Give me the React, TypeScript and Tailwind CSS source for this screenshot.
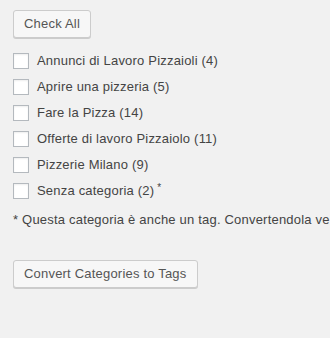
import React from 'react';

const categories = [
  { name: 'Annunci di Lavoro Pizzaioli', count: 4 },
  { name: 'Aprire una pizzeria', count: 5 },
  { name: 'Fare la Pizza', count: 14 },
  { name: 'Offerte di lavoro Pizzaiolo', count: 11 },
  { name: 'Pizzerie Milano', count: 9 },
  { name: 'Senza categoria', count: 2, tag: true },
];

const WpButton = ({ children }: { children: React.ReactNode }) => (
  <button
    type="button"
    className="h-[28px] px-[10px] pb-[1px] rounded-[3px] border border-[#cccccc] bg-[#f7f7f7] text-[#555555] text-[13px] leading-[26px] tracking-[0.2px] shadow-[0_1px_0_#cccccc] whitespace-nowrap"
  >
    {children}
  </button>
);

export default function App() {
  return (
    <div
      className="w-[330px] h-[338px] overflow-hidden bg-[#f1f1f1] text-[#444444] text-[13px] tracking-[0.2px] pt-[10px] pl-[13px]"
      style={{ fontFamily: '"Liberation Sans", Arial, sans-serif' }}
    >
      <WpButton>Check All</WpButton>

      <ul className="mt-[10px]">
        {categories.map((c) => (
          <li key={c.name} className="h-[26px] flex items-center gap-[8px]">
            <span className="w-[16px] h-[16px] shrink-0 bg-white border border-[#b4b9be] shadow-[inset_0_1px_2px_rgba(0,0,0,0.07)]" />
            <span className="whitespace-nowrap">
              {c.name} ({c.count})
              {c.tag && <span className="ml-[3px] text-[10px] relative top-[-4px]">*</span>}
            </span>
          </li>
        ))}
      </ul>

      <p className="mt-[6px] leading-[20px] whitespace-nowrap">
        * Questa categoria è anche un tag. Convertendola verrà aggiunto ai post già taggati.
      </p>

      <div className="mt-[30px]">
        <WpButton>Convert Categories to Tags</WpButton>
      </div>
    </div>
  );
}
